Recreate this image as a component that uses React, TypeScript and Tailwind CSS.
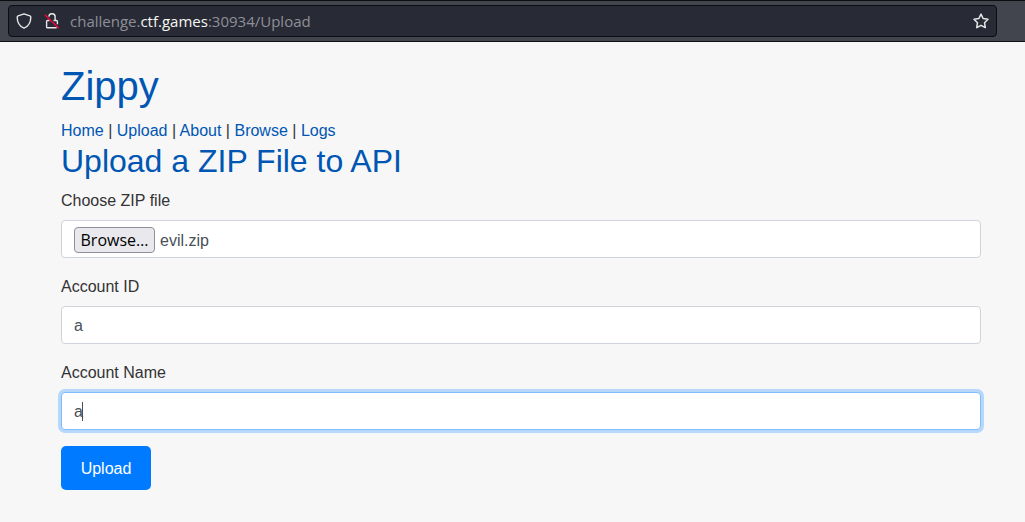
import { useRef, useState } from "react";

const links = ["Home", "Upload", "About", "Browse", "Logs"];

function AddressBar() {
  return (
    <header className="border-y border-[#0c0d10] bg-[#42454e] py-1 pr-7 pl-2">
      <div className="flex h-8 items-center rounded border border-[#0c0d10] bg-[#282a36] px-[7px]">
        <button type="button" aria-label="Tracking protection" className="mr-3 text-[#e6e6e8]">
          <svg className="size-4" viewBox="0 0 16 16" fill="none" stroke="currentColor" strokeWidth="1.4" strokeLinejoin="round">
            <path d="M8 .8 13.900 2.900c.6.2.9.7.9 1.300C14.800 9.600 12.500 13.200 8 15.200 3.500 13.200 1.200 9.600 1.200 4.200c0-.6.3-1.100.9-1.300z" />
          </svg>
        </button>
        <button type="button" aria-label="Connection not secure" className="mr-2.5 text-[#e6e6e8]">
          <svg className="size-4" viewBox="0 0 16 16" fill="none" stroke="currentColor" strokeWidth="1.4">
            <path d="M4.900 3.600a3.100 3.100 0 0 1 6.200.4v3.500" />
            <path d="M9.500 7.500h3c.5 0 .9.400.9.900v2.800M5.500 7.500h-2c-.5 0-.9.400-.9.900v5.500c0 .5.400.9.900.9h9.200" />
            <path d="M.8 1.800 14.800 15.200" stroke="#ff0039" strokeWidth="1.300" />
          </svg>
        </button>
        <a
          href="#upload"
          className="flex-1 text-[15px] leading-6 text-[#8f9096]"
          style={{ fontFamily: '"Open Sans", "Noto Sans", sans-serif' }}
        >
          challenge.<span className="text-[#f8f8f2]">ctf.games</span>:30934/Upload
        </a>
        <button type="button" aria-label="Bookmark this page" className="text-[#e6e6e8]">
          <svg className="size-4" viewBox="0 0 16 16" fill="none" stroke="currentColor" strokeWidth="1.500" strokeLinejoin="round">
            <path d="M8 1.100 10.100 5.500l4.900.7-3.500 3.500.8 4.900L8 12.300l-4.300 2.300.8-4.900L1 6.200l4.900-.7z" />
          </svg>
        </button>
      </div>
    </header>
  );
}

const labelClass = "mb-2 block pt-0.5 leading-[22px]";

export default function App() {
  const fileRef = useRef<HTMLInputElement>(null);
  const [fileName, setFileName] = useState("evil.zip");
  const [accountId, setAccountId] = useState("a");
  const [accountName, setAccountName] = useState("a");

  return (
    <div
      className="min-h-screen bg-[#f7f7f7] text-[16px] leading-6 text-[#333333]"
      style={{ fontFamily: '"Liberation Sans", Arial, sans-serif' }}
    >
      <AddressBar />
      <main className="pt-5 pr-11 pb-8 pl-[61px]">
        <h1 className="mb-2 text-[40px] leading-12 text-[#0056b3]">Zippy</h1>
        <nav className="pt-0.5 leading-[22px]">
          {links.map((link, i) => (
            <span key={link}>
              {i > 0 && " | "}
              <a href={`#${link.toLowerCase()}`} className="text-[#0056b3] hover:underline">
                {link}
              </a>
            </span>
          ))}
        </nav>
        <h2 className="mb-2 text-[32px] leading-[38px] text-[#0056b3]">Upload a ZIP File to API</h2>
        <form onSubmit={(e) => e.preventDefault()}>
          <div className="mb-4">
            <label htmlFor="zip" className={labelClass}>
              Choose ZIP file
            </label>
            <div className="relative flex h-[38px] items-center gap-[5px] rounded border border-[#ced4da] bg-white px-3 pt-0.5 text-[#495057]">
              <input
                ref={fileRef}
                id="zip"
                type="file"
                accept=".zip"
                className="sr-only"
                onChange={(e) => setFileName(e.target.files?.[0]?.name ?? "No file selected.")}
              />
              <button
                type="button"
                onClick={() => fileRef.current?.click()}
                className="h-[26px] min-w-[81px] rounded border border-[#8f8f9d] bg-[#e9e9ed] px-[5px] text-[16px] leading-6 text-black"
                style={{ fontFamily: '"Open Sans", "Noto Sans", sans-serif' }}
              >
                Browse…
              </button>
              <span className="pt-0.5 leading-[22px]">{fileName}</span>
            </div>
          </div>
          <div className="mb-4">
            <label htmlFor="account-id" className={labelClass}>
              Account ID
            </label>
            <input
              id="account-id"
              type="text"
              value={accountId}
              onChange={(e) => setAccountId(e.target.value)}
              className="block h-[38px] w-full rounded border border-[#ced4da] bg-white px-3 pt-0.5 text-[#495057] outline-none"
            />
          </div>
          <div className="mb-4">
            <label htmlFor="account-name" className={labelClass}>
              Account Name
            </label>
            <div className="relative">
              <input
                id="account-name"
                type="text"
                value={accountName}
                onChange={(e) => setAccountName(e.target.value)}
                className="block h-[38px] w-full rounded border border-[#80bdff] bg-white px-3 pt-0.5 text-[#495057] caret-transparent ring-3 ring-[#b8d8fb] outline-none"
              />
              <span aria-hidden="true" className="pointer-events-none absolute inset-y-0 left-3 flex items-center">
                <span className="invisible">{accountName}</span>
                <span className="h-[19px] w-px bg-[#495057]" />
              </span>
            </div>
          </div>
          <button
            type="submit"
            className="block h-11 min-w-[90px] rounded-[5px] bg-[#007bff] px-[19px] pt-0.5 text-white hover:bg-[#0069d9]"
          >
            Upload
          </button>
        </form>
      </main>
    </div>
  );
}
